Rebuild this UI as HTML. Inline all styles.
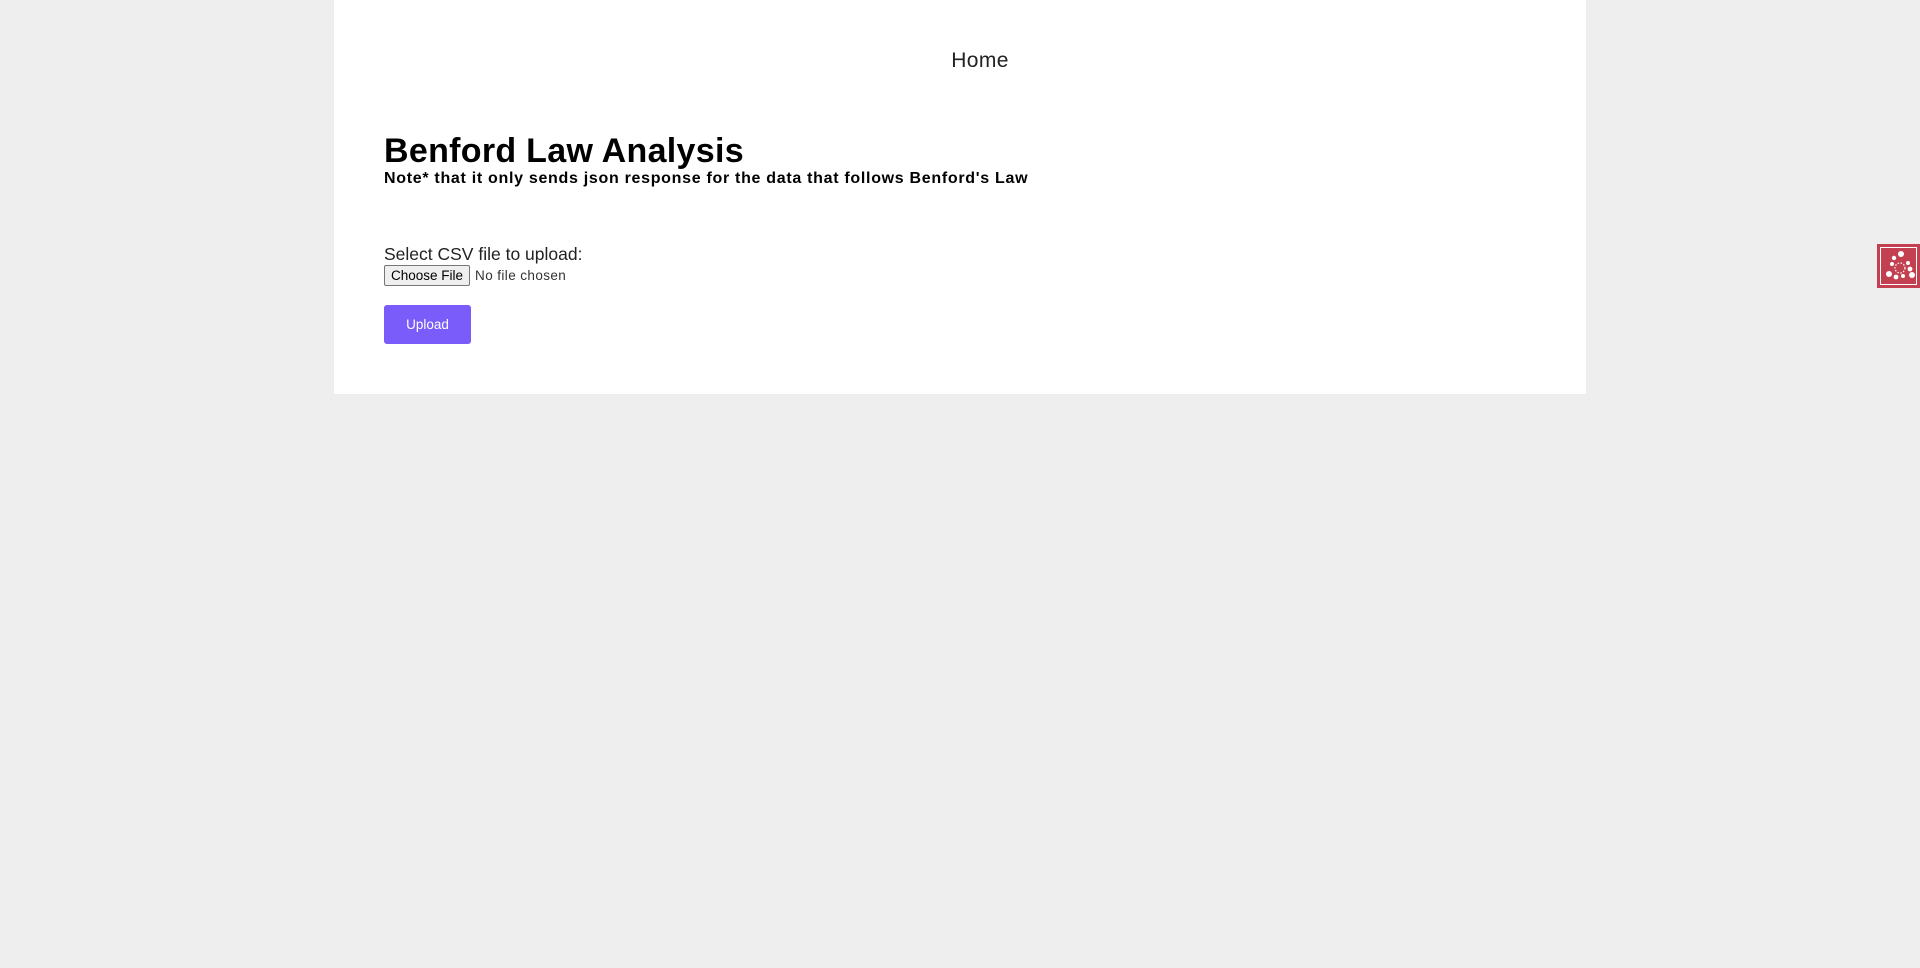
<!DOCTYPE html>
<html><head><meta charset="utf-8"><style>
html,body{margin:0;padding:0;background:#eeeeee;width:1920px;height:968px;overflow:hidden;font-family:"Liberation Sans",sans-serif;}
.panel{position:absolute;left:334px;top:0;width:1252px;height:394px;background:#fff;}
.home{position:absolute;left:20px;width:100%;top:49px;text-align:center;font-size:21px;color:#222;letter-spacing:0.4px;}
h1{position:absolute;left:50px;top:132px;margin:0;font-size:34px;font-weight:bold;color:#000;letter-spacing:0.3px;}
.note{position:absolute;left:50px;top:170px;font-size:16px;font-weight:bold;color:#000;letter-spacing:0.7px;}
.lbl{position:absolute;left:50px;top:244px;font-size:17.5px;color:#222;}
.file{position:absolute;left:50px;top:265px;font-size:13.5px;color:#333;display:flex;align-items:center;letter-spacing:0.4px;}
.file span.b{display:inline-block;border:1px solid #767676;background:#efefef;border-radius:2px;padding:1px 6px;font-size:13.5px;color:#000;margin-right:5px;height:17px;line-height:17px;letter-spacing:0;}
.up{position:absolute;left:50px;top:305px;width:87px;height:39px;background:#7a5cfa;border-radius:3px;color:#fff;font-size:13.5px;text-align:center;line-height:39px;}
.side{position:absolute;left:1877px;top:244px;width:43px;height:44px;background:#c2404f;box-sizing:border-box;border:2px solid #c2404f;outline:1px solid #fff;outline-offset:-4px;}
</style></head><body>
<div class="panel">
<div class="home">Home</div>
<h1>Benford Law Analysis</h1>
<div class="note">Note* that it only sends json response for the data that follows Benford's Law</div>
<div class="lbl">Select CSV file to upload:</div>
<div class="file"><span class="b">Choose File</span>No file chosen</div>
<div class="up">Upload</div>
</div>
<div class="side"><svg width="39" height="40" viewBox="0 0 39 40" fill="#fff">
<circle cx="22" cy="8" r="3"/><circle cx="15" cy="12" r="2.2"/><circle cx="13" cy="18" r="2"/><circle cx="29" cy="17" r="2"/><circle cx="31" cy="23" r="2.4"/><circle cx="10" cy="28" r="3"/><circle cx="17" cy="31" r="2.4"/><circle cx="24" cy="30" r="2"/><circle cx="33" cy="29" r="3"/>
<circle cx="21" cy="22" r="5" fill="none" stroke="#fff" stroke-width="1.2" stroke-dasharray="1.5 1.5"/>
</svg></div>
</body></html>
